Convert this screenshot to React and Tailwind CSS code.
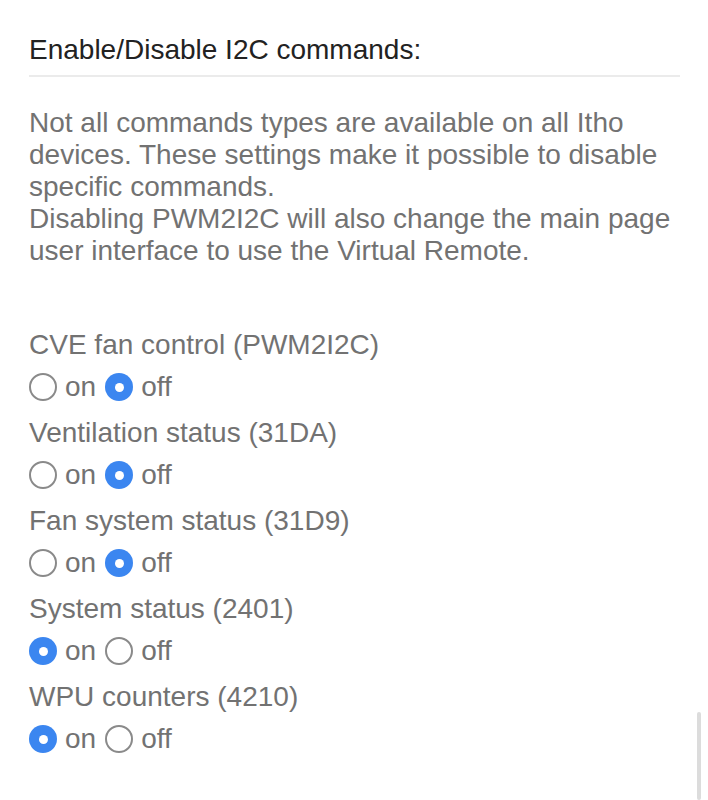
import React, { useState } from 'react'

const commands = [
  { id: 'pwm2i2c', label: 'CVE fan control (PWM2I2C)', value: 'off' },
  { id: '31da', label: 'Ventilation status (31DA)', value: 'off' },
  { id: '31d9', label: 'Fan system status (31D9)', value: 'off' },
  { id: '2401', label: 'System status (2401)', value: 'on' },
  { id: '4210', label: 'WPU counters (4210)', value: 'on' },
]

function Radio({ checked, onClick }) {
  return checked ? (
    <span onClick={onClick} className="w-[28px] h-[28px] rounded-full bg-[#3b86f0] flex items-center justify-center shrink-0">
      <span className="w-[9px] h-[9px] rounded-full bg-white" />
    </span>
  ) : (
    <span onClick={onClick} className="w-[28px] h-[28px] rounded-full border-2 border-[#8a8a8a] bg-white shrink-0" />
  )
}

export default function App() {
  const [values, setValues] = useState(Object.fromEntries(commands.map(c => [c.id, c.value])))

  return (
    <div className="relative min-h-screen bg-white font-['Liberation_Sans',Arial,sans-serif]">
      <div className="ml-[29px] pt-[30px] w-[651px]">
        <h2 className="text-[28px] leading-[40px] text-[#222] pb-[5px] border-b-2 border-[#ebebeb]">Enable/Disable I2C commands:</h2>

        <p className="mt-[30px] text-[28px] leading-[32px] text-[#727272]">
          Not all commands types are available on all Itho devices. These settings make it possible to disable specific commands.
          <br />
          Disabling PWM2I2C will also change the main page user interface to use the Virtual Remote.
        </p>

        <div className="mt-[58px] flex flex-col">
          {commands.map(c => (
            <div key={c.id} className="h-[88px]">
              <div className="text-[28px] leading-[40px] text-[#727272]">{c.label}</div>
              <div className="flex items-center h-[44px] text-[28px] text-[#727272]">
                <Radio checked={values[c.id] === 'on'} onClick={() => setValues({ ...values, [c.id]: 'on' })} />
                <span className="ml-[8px] mr-[9px]">on</span>
                <Radio checked={values[c.id] === 'off'} onClick={() => setValues({ ...values, [c.id]: 'off' })} />
                <span className="ml-[8px]">off</span>
              </div>
            </div>
          ))}
        </div>
      </div>
      <div className="absolute right-[7px] top-[712px] w-[4px] h-[88px] rounded-full bg-[#dcdcdc]" />
    </div>
  )
}
